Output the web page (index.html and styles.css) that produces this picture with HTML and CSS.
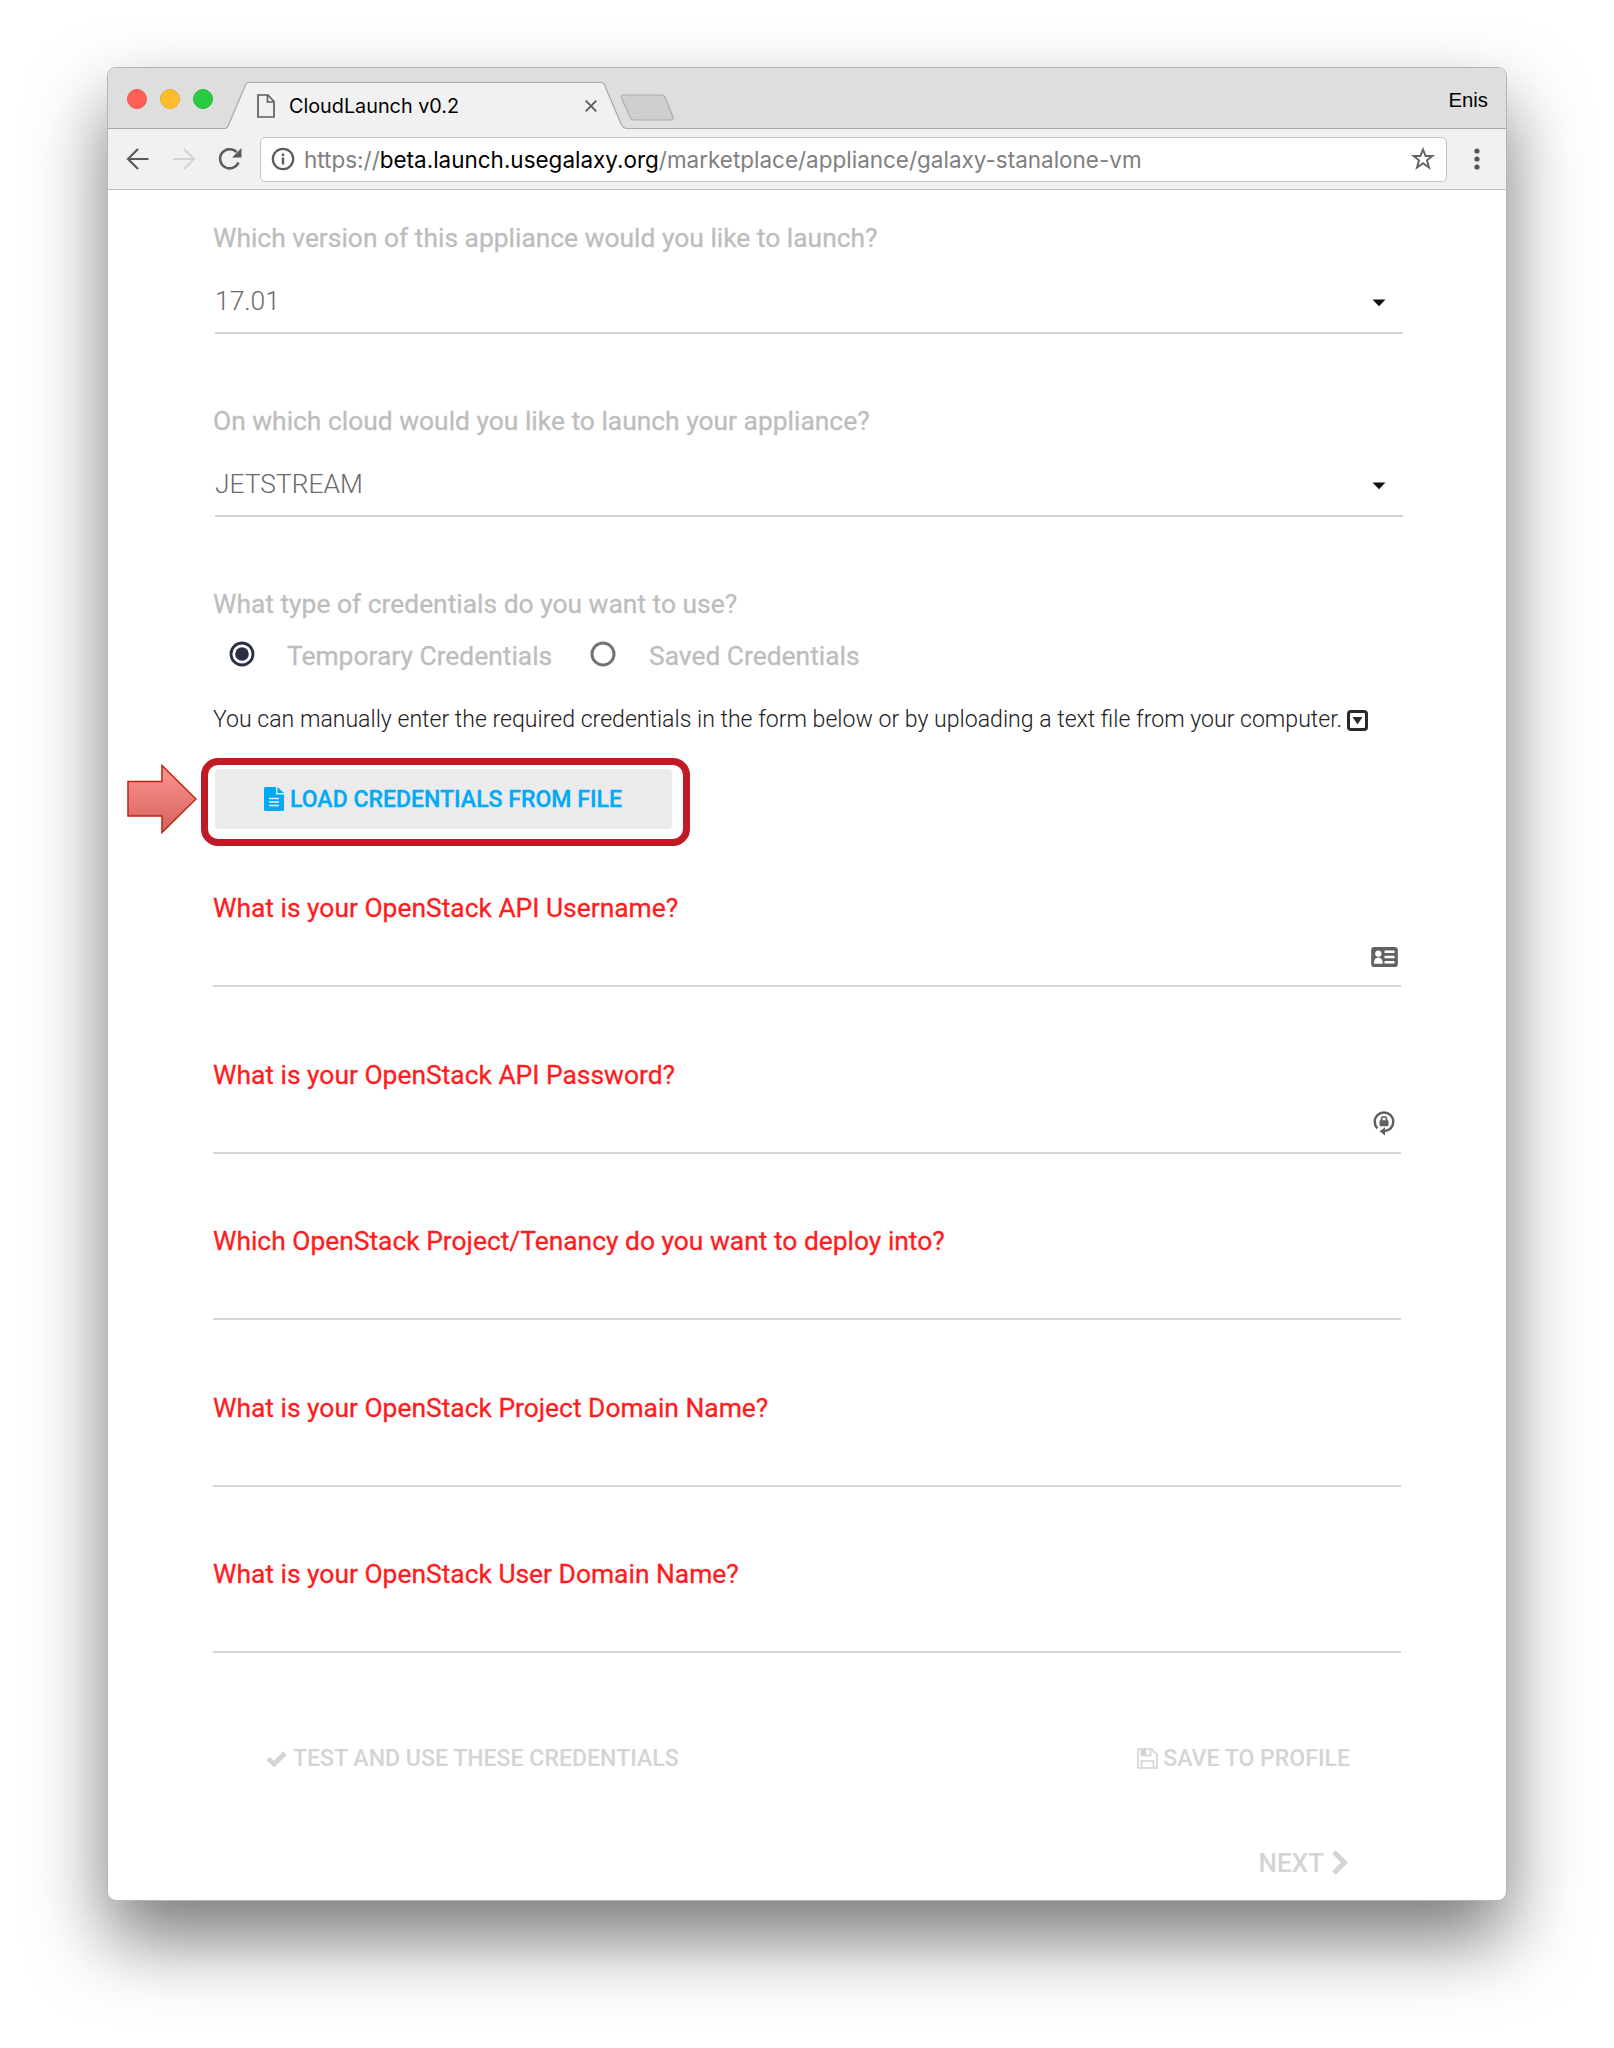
FILE: index.html
```html
<!DOCTYPE html>
<html lang="en">
<head>
<meta charset="utf-8">
<title>CloudLaunch v0.2</title>
<link rel="stylesheet" href="styles.css">
</head>
<body>
<div class="window">
  <header class="tabstrip">
    <div class="lights"><i class="light close"></i><i class="light minimize"></i><i class="light zoom"></i></div>
    <div class="tab">
      <svg class="tab-shape" width="402" height="48" viewBox="0 0 402 48"><path d="M0 46.5C2 46 3 44.500 3.500 43L20.500 3Q21.500 .5 24 .5H376Q378.500 .5 379.500 3L396.500 43Q398 46 401 46.500V48H0Z" fill="#f1f1f1"/><path d="M0 46.500C2 46 3 44.500 3.500 43L20.500 3Q21.500 .5 24 .5H376Q378.500 .5 379.500 3L396.500 43Q398 46 401 46.500" fill="none" stroke="#a9a9a9" stroke-width="1.200"/></svg>
      <svg class="tab-doc" width="18" height="24" viewBox="0 0 18 24" fill="none" stroke="#5e5e5e" stroke-width="1.700"><path d="M1 1H11L17 7.500V23H1Z"/><path d="M10.500 1V8H17"/></svg>
      <span class="tab-title">CloudLaunch v0.2</span>
      <svg class="tab-close" width="12" height="12" viewBox="0 0 12 12" stroke="#5a5a5a" stroke-width="1.800"><path d="M.7.7 11.300 11.300M11.300.7.7 11.300"/></svg>
    </div>
    <svg class="new-tab" width="55" height="27" viewBox="0 0 55 27"><path d="M3 1H41.500Q44 1 45 3L53 23Q54 26 51.500 26H14Q11.500 26 10.500 24L1.500 4Q.5 1 3 1Z" fill="#cfcfcf" stroke="#adadad" stroke-width="1.200"/></svg>
    <span class="profile">Enis</span>
  </header>
  <div class="toolbar">
    <svg class="nav-icon" width="24" height="24" viewBox="0 0 24 24" fill="none" stroke="#5b5b5b" stroke-width="2.200"><path d="M22.500 12H2.500M12 2 2 12 12 22"/></svg>
    <svg class="nav-icon" width="24" height="24" viewBox="0 0 24 24" fill="none" stroke="#d5d5d5" stroke-width="2.200"><path d="M1 12H21.500M12 2 22 12 12 22"/></svg>
    <svg class="nav-icon" width="24" height="24" viewBox="0 0 24 24"><path d="M20.500 15.500A9.600 9.600 0 1 1 18.500 5" fill="none" stroke="#5b5b5b" stroke-width="2.500"/><path d="M23.500 1V10.500H14Z" fill="#5b5b5b"/></svg>
    <div class="omnibox">
      <svg width="24" height="24" viewBox="0 0 24 24" fill="none" stroke="#5b5b5b"><circle cx="12" cy="12" r="10.200" stroke-width="2.200"/><path d="M12 10.500V17.500M12 6.500V9" stroke-width="2.400"/></svg>
      <span class="url">https://<b>beta.launch.usegalaxy.org</b>/marketplace/appliance/galaxy-stanalone-vm</span>
      <svg class="star" width="26" height="26" viewBox="0 0 26 26"><path d="M13 3.500 15.600 10H22.300L17 14.300 19 21.500 13 17.300 7 21.500 9 14.300 3.700 10H10.400Z" fill="none" stroke="#666" stroke-width="2"/></svg>
    </div>
    <svg class="menu" width="6" height="22" viewBox="0 0 6 22" fill="#555"><circle cx="3" cy="3" r="2.600"/><circle cx="3" cy="11" r="2.600"/><circle cx="3" cy="19" r="2.600"/></svg>
  </div>
  <main class="page">
    <section class="choice">
      <div class="question">Which version of this appliance would you like to launch?</div>
      <div class="select"><span>17.01</span><svg width="14" height="8" viewBox="0 0 14 8"><path d="M.5.5H13.500L7 7.300Z" fill="#111"/></svg></div>
    </section>
    <section class="choice">
      <div class="question">On which cloud would you like to launch your appliance?</div>
      <div class="select"><span>JETSTREAM</span><svg width="14" height="8" viewBox="0 0 14 8"><path d="M.5.5H13.500L7 7.300Z" fill="#111"/></svg></div>
    </section>
    <section class="credentials">
      <div class="question">What type of credentials do you want to use?</div>
      <div class="radios">
        <svg width="26" height="26" viewBox="0 0 26 26"><circle cx="13" cy="13" r="11" fill="none" stroke="#2a2f45" stroke-width="2.800"/><circle cx="13" cy="13" r="6.800" fill="#2a2f45"/></svg>
        <span class="radio-label first">Temporary Credentials</span>
        <svg width="26" height="26" viewBox="0 0 26 26"><circle cx="13" cy="13" r="11" fill="none" stroke="#737373" stroke-width="3"/></svg>
        <span class="radio-label">Saved Credentials</span>
      </div>
      <p class="hint">You can manually enter the required credentials in the form below or by uploading a text file from your computer. <svg width="21" height="21" viewBox="0 0 21 21"><rect x="1.500" y="1.500" width="18" height="18" rx="2.500" fill="none" stroke="#292929" stroke-width="3"/><path d="M5.500 7H15.500L10.500 14.500Z" fill="#292929"/></svg></p>
      <div class="load-row">
        <div class="load-button"><svg width="20" height="24" viewBox="0 0 20 24"><path d="M1.500 0H12V7.500H20V22.500Q20 24 18.500 24H1.500Q0 24 0 22.500V1.500Q0 0 1.500 0ZM13.500 0 20 6H13.500Z" fill="#00aaf8"/><path d="M5 11.500H15M5 15H15M5 18.500H15" stroke="#ebebeb" stroke-width="1.500"/></svg>LOAD CREDENTIALS FROM FILE</div>
        <div class="callout"></div>
        <svg class="pointer" width="70" height="70" viewBox="0 0 70 70"><defs><linearGradient id="arrow-fill" x1="0" y1="0" x2="0" y2="1"><stop offset="0" stop-color="#ff9591"/><stop offset="1" stop-color="#d3625e"/></linearGradient></defs><path d="M1 17.500H35V1.500L69 35 35 68.500V52H1Z" fill="url(#arrow-fill)" stroke="#bd2510" stroke-width="1.500"/></svg>
      </div>
    </section>
    <section class="field"><div class="question required">What is your OpenStack API Username?</div>
      <div class="input"><svg width="27" height="20" viewBox="0 0 28 21"><rect width="28" height="21" rx="3.500" fill="#616161"/><g fill="#fff"><circle cx="7.500" cy="7" r="3.300"/><path d="M2.800 17.500Q3 11 7.500 11T12.200 17.500Z"/><path d="M14 3.800H24.500V6.200H14ZM14 9.300H24.500V11.700H14ZM14 14.800H24.500V17.200H14Z"/></g></svg></div></section>
    <section class="field"><div class="question required">What is your OpenStack API Password?</div>
      <div class="input"><svg class="lock" width="22" height="25" viewBox="0 0 22 25"><path d="M4.400 17.300A9.300 9.300 0 1 1 17.600 17.300Q15.500 19.600 11 20.300" fill="none" stroke="#616161" stroke-width="2.500"/><path d="M6.500 20.300 12 16.200V24.500Z" fill="#616161"/><rect x="6.500" y="9.300" width="9" height="6" rx=".8" fill="#616161"/><path d="M8.500 10V8.300A2.500 2.500 0 0 1 13.500 8.300V10" fill="none" stroke="#616161" stroke-width="1.600"/></svg></div></section>
    <section class="field"><div class="question required">Which OpenStack Project/Tenancy do you want to deploy into?</div><div class="input"></div></section>
    <section class="field"><div class="question required">What is your OpenStack Project Domain Name?</div><div class="input"></div></section>
    <section class="field"><div class="question required">What is your OpenStack User Domain Name?</div><div class="input"></div></section>
    <div class="actions">
      <span class="action"><svg class="check" width="21" height="16" viewBox="0 0 21 16"><path d="M2 7.500 8 13 19 2.300" fill="none" stroke="#d4d4d4" stroke-width="4.800"/></svg>TEST AND USE THESE CREDENTIALS</span>
      <span class="action"><svg class="disk" width="21" height="21" viewBox="0 0 21 21"><path d="M1 1H14.500L20 6.500V20H1ZM4.500 20V13H16.500V20M4.500 1V7.500H13.500V1" fill="none" stroke="#d4d4d4" stroke-width="1.600"/><path d="M4.500 1H9V7.500H4.500Z" fill="#d4d4d4"/></svg>SAVE TO PROFILE</span>
    </div>
    <div class="next">NEXT<svg width="16" height="25" viewBox="0 0 16 25"><path d="M2 2 12.500 12.500 2 23" fill="none" stroke="#d4d4d4" stroke-width="5"/></svg></div>
  </main>
</div>
</body>
</html>
```
FILE: styles.css
```css
* { box-sizing: border-box; }
body { margin: 0; min-height: 2048px; padding: 67px 107px 0; background: #fff; font-family: Roboto, sans-serif; }
svg { display: block; flex: none; }
.window { width: 1400px; height: 1834px; border-radius: 9px; background: #fff; border: 1px solid #b5b5b5; box-shadow: 0 38px 76px rgba(0,0,0,.53); }

.tabstrip { display: flex; height: 61px; padding-left: 19px; background: #dedede; border-bottom: 1px solid #a9a9a9; border-radius: 8px 8px 0 0; }
.lights { display: flex; gap: 13px; width: 98px; padding-top: 21px; }
.light { width: 20px; height: 20px; border-radius: 50%; }
.close { background: #ff5f57; border: 1px solid #f2534c; }
.minimize { background: #ffbd2e; border: 1px solid #eead22; }
.zoom { background: #28cd41; border: 1px solid #20bd36; }
.tab { position: relative; display: flex; width: 402px; height: 48px; margin-top: 14px; padding-left: 32px; }
.tab-shape { position: absolute; left: 0; top: 0; }
.tab-doc { position: relative; margin-top: 12px; }
.tab-title { position: relative; width: 296px; margin: 10px 0 0 14px; font: 19.800px/28px Inter, sans-serif; color: #000; white-space: nowrap; }
.tab-close { position: relative; margin-top: 18px; }
.new-tab { margin: 26px 0 0 -7px; }
.profile { margin: 18px 18px 0 auto; font: 20.300px/28px "Liberation Sans", sans-serif; color: #000; }

.toolbar { display: flex; align-items: center; height: 61px; padding: 0 26px 0 18px; background: #f1f1f1; border-bottom: 1px solid #bcbcbc; }
.nav-icon { margin-right: 22px; }
.omnibox { display: flex; align-items: center; width: 1187px; height: 45px; margin-left: -4px; padding: 0 10px; background: #fff; border: 1px solid #c4c4c4; border-radius: 5px; }
.url { margin: 2px 0 0 9px; font: 22.480px/30px Inter, sans-serif; color: #808080; white-space: nowrap; }
.url b { font-weight: 400; color: #000; }
.star { margin-left: auto; }
.menu { margin-left: auto; }

.page { padding: 34px 0 0 105px; }
.question { height: 30px; font-size: 26.400px; line-height: 28px; color: #bdbdbd; white-space: nowrap; -webkit-text-stroke: .3px currentColor; }
.required { color: #ff1c20; }
.choice { height: 183px; }
.select { display: flex; justify-content: space-between; align-items: center; width: 1188px; height: 80px; margin-left: 2px; padding: 16px 17px 0 0; border-bottom: 2px solid #d2d2d2; font-size: 26.400px; font-weight: 300; line-height: 30px; color: #6a6a6a; }
.select svg { margin-top: 4px; }
.credentials { height: 304px; }
.radios { display: flex; align-items: center; height: 26px; margin-top: 21px; padding-left: 16px; }
.radio-label { margin: 4px 0 0 33px; font-size: 26.400px; line-height: 30px; color: #bdbdbd; -webkit-text-stroke: .3px currentColor; }
.radio-label.first { width: 303px; margin-left: 32px; }
.hint { display: flex; align-items: center; gap: 5px; height: 30px; margin: 38px 0 0; font-size: 23.080px; font-weight: 300; line-height: 32px; color: #212121; white-space: nowrap; }
.load-row { position: relative; margin: 34px 0 0 2px; width: 457px; }
.load-button { display: flex; align-items: center; height: 60px; padding-left: 49px; gap: 6px; background: #ebebeb; border-radius: 4px; font-size: 23.050px; font-weight: 500; color: #00aaf8; white-space: nowrap; -webkit-text-stroke: .3px currentColor; }
.callout { position: absolute; left: -14px; top: -11px; width: 489px; height: 88px; border: 7px solid #c01b24; border-radius: 17px; }
.pointer { position: absolute; left: -88px; top: -5px; }

.field { height: 166.600px; }
.input { display: flex; justify-content: flex-end; align-items: flex-end; width: 1188px; height: 63px; padding: 0 3px 18px 0; border-bottom: 2px solid #d6d6d6; }
.lock { margin: 0 3px -2px 0; }
.actions { display: flex; justify-content: space-between; width: 1137px; height: 30px; margin-top: 17px; padding-left: 53px; font-size: 23.080px; font-weight: 500; line-height: 32px; color: #d4d4d4; }
.action { display: flex; align-items: center; white-space: nowrap; }
.check { margin-right: 6px; }
.disk { margin-right: 5px; }
.next { display: flex; align-items: center; justify-content: flex-end; gap: 8px; width: 1135px; height: 30px; margin-top: 74px; font-size: 26px; font-weight: 500; color: #d4d4d4; }
```
